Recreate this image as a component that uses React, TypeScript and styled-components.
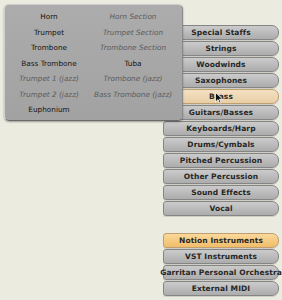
import React from "react";
import styled, { createGlobalStyle } from "styled-components";

const GlobalStyle = createGlobalStyle`
  html, body {
    margin: 0;
    padding: 0;
    background: #ebebe0;
  }
  body {
    width: 282px;
    height: 300px;
    overflow: hidden;
    font-family: "DejaVu Sans", Verdana, sans-serif;
  }
`;

const Page = styled.div`
  position: relative;
  width: 282px;
  height: 300px;
  background: #ebebe0;
`;

const Column = styled.div`
  display: flex;
  flex-direction: column;
  gap: 1px;
  padding: 25px 3px 0 163px;
`;

const Spacer = styled.div`
  height: 15px;
`;

const Button = styled.div<{ $tone?: "brass" | "notion" }>`
  height: 13px;
  border: 1px solid #858585;
  border-radius: 3px 7px 7px 3px;
  background: ${(p) =>
    p.$tone === "brass"
      ? "linear-gradient(#f4e0c2, #e8cea6)"
      : p.$tone === "notion"
      ? "linear-gradient(#fbd89a, #f0bd6a)"
      : "linear-gradient(#cbcbcb, #acacac)"};
  border-color: ${(p) => (p.$tone ? "#bf9f70" : "#858585")};
  box-shadow: 0 1px 0 rgba(0, 0, 0, 0.12);
  display: flex;
  align-items: center;
  justify-content: center;
  white-space: nowrap;
  font-size: 7.5px;
  font-weight: bold;
  color: #262626;
  letter-spacing: 0.1px;
`;

const Popup = styled.div`
  position: absolute;
  left: 4px;
  top: 4px;
  width: 179px;
  height: 117px;
  box-sizing: border-box;
  border-radius: 5px;
  background: linear-gradient(#acacac, #a2a2a2);
  border: 1px solid #cfcfcf;
  border-bottom-color: #6a6a6a;
  border-right-color: #8a8a8a;
  box-shadow: 0 1px 2px rgba(0, 0, 0, 0.35);
  display: grid;
  grid-template-columns: 84px 84px;
  grid-auto-rows: 15.5px;
  padding: 4px 0 0 2px;
  z-index: 2;
`;

const Cell = styled.div<{ $dim?: boolean }>`
  display: flex;
  align-items: center;
  justify-content: center;
  white-space: nowrap;
  font-family: "DejaVu Sans", sans-serif;
  font-size: 7.3px;
  color: ${(p) => (p.$dim ? "#5c5c5c" : "#141414")};
  font-style: ${(p) => (p.$dim ? "italic" : "normal")};
`;

const Cursor = styled.svg`
  position: absolute;
  left: 215px;
  top: 92px;
  z-index: 3;
`;

const rows: [string, boolean, string, boolean][] = [
  ["Horn", false, "Horn Section", true],
  ["Trumpet", false, "Trumpet Section", true],
  ["Trombone", false, "Trombone Section", true],
  ["Bass Trombone", false, "Tuba", false],
  ["Trumpet 1 (jazz)", true, "Trombone (jazz)", true],
  ["Trumpet 2 (jazz)", true, "Bass Trombone (jazz)", true],
  ["Euphonium", false, "", false],
];

const families = [
  "Special Staffs",
  "Strings",
  "Woodwinds",
  "Saxophones",
  "Brass",
  "Guitars/Basses",
  "Keyboards/Harp",
  "Drums/Cymbals",
  "Pitched Percussion",
  "Other Percussion",
  "Sound Effects",
  "Vocal",
];

const sources = [
  "Notion Instruments",
  "VST Instruments",
  "Garritan Personal Orchestra",
  "External MIDI",
];

export default function App() {
  return (
    <Page>
      <GlobalStyle />
      <Popup>
        {rows.map(([a, ad, b, bd]) => (
          <React.Fragment key={a}>
            <Cell $dim={ad}>{a}</Cell>
            <Cell $dim={bd}>{b}</Cell>
          </React.Fragment>
        ))}
      </Popup>
      <Column>
        {families.map((f) => (
          <Button key={f} $tone={f === "Brass" ? "brass" : undefined}>
            {f}
          </Button>
        ))}
        <Spacer />
        {sources.map((s, i) => (
          <Button key={s} $tone={i === 0 ? "notion" : undefined}>
            {s}
          </Button>
        ))}
      </Column>
      <Cursor width="8" height="12" viewBox="0 0 8 12">
        <path d="M0.5 0.5 L0.5 10 L3 7.6 L4.6 11.2 L6 10.6 L4.4 7.2 L7.5 7.2 Z" fill="#111" stroke="#fff" strokeWidth="0.8" />
      </Cursor>
    </Page>
  );
}
